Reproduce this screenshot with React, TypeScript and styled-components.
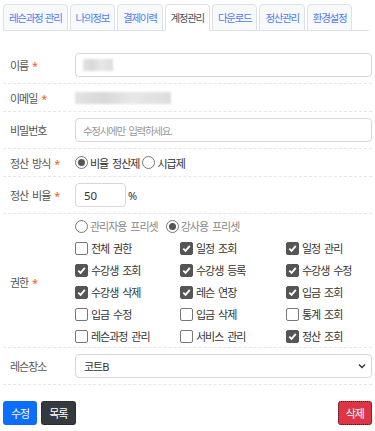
import styled, { createGlobalStyle } from "styled-components";

const GlobalStyle = createGlobalStyle`
  body {
    margin: 0;
    background: #fff;
    font-family: "Noto Sans", "Noto Sans CJK KR", sans-serif;
    font-size: 11px;
    letter-spacing: -1px;
    word-spacing: 2px;
    color: #333;
  }
  * { box-sizing: border-box; }
`;

const tabs = ["레슨과정 관리", "나의정보", "결제이력", "계정관리", "다운로드", "정산관리", "환경설정"];

const perms = [
  { name: "전체 권한", on: false },
  { name: "일정 조회", on: true },
  { name: "일정 관리", on: true },
  { name: "수강생 조회", on: true },
  { name: "수강생 등록", on: true },
  { name: "수강생 수정", on: true },
  { name: "수강생 삭제", on: true },
  { name: "레슨 연장", on: true },
  { name: "입금 조회", on: true },
  { name: "입금 수정", on: false },
  { name: "입금 삭제", on: false },
  { name: "통계 조회", on: false },
  { name: "레슨과정 관리", on: false },
  { name: "서비스 관리", on: false },
  { name: "정산 조회", on: true },
];

function Check({ on }: { on: boolean }) {
  return (
    <CheckBox $on={on}>
      {on && (
        <svg width="11" height="11" viewBox="0 0 12 12">
          <path d="M2.5 6.2 L5 8.6 L9.6 3.2" fill="none" stroke="#fff" strokeWidth="2" />
        </svg>
      )}
    </CheckBox>
  );
}

function Radio({ on }: { on: boolean }) {
  return <RadioDot $on={on} />;
}

function App() {
  return (
    <Page>
      <GlobalStyle />
      <Tabs>
        {tabs.map((t) => (
          <Tab key={t} $active={t === "계정관리"}>
            {t}
          </Tab>
        ))}
      </Tabs>
      <Form>
        <Row>
          <Label>
            이름 <Req>*</Req>
          </Label>
          <Input>
            <Blur $w={30} />
          </Input>
        </Row>
        <Row $tight>
          <Label>
            이메일 <Req>*</Req>
          </Label>
          <Blur $w={96} />
        </Row>
        <Row>
          <Label>비밀번호</Label>
          <Input>
            <Placeholder>수정시에만 입력하세요.</Placeholder>
          </Input>
        </Row>
        <Row $tight>
          <Label>
            정산 방식 <Req>*</Req>
          </Label>
          <Option>
            <Radio on />
            비율 정산제
          </Option>
          <Option>
            <Radio on={false} />
            시급제
          </Option>
        </Row>
        <Row>
          <Label>
            정산 비율 <Req>*</Req>
          </Label>
          <SmallInput>50</SmallInput>
          <Unit>%</Unit>
        </Row>
        <Row $tall>
          <Label>
            권한 <Req>*</Req>
          </Label>
          <PermBox>
            <Presets>
              <Option $muted>
                <Radio on={false} />
                관리자용 프리셋
              </Option>
              <Option $muted>
                <Radio on />
                강사용 프리셋
              </Option>
            </Presets>
            <PermGrid>
              {perms.map((p) => (
                <PermItem key={p.name}>
                  <Check on={p.on} />
                  {p.name}
                </PermItem>
              ))}
            </PermGrid>
          </PermBox>
        </Row>
        <Row>
          <Label>레슨장소</Label>
          <Select>
            <span>코트B</span>
            <svg width="8" height="6" viewBox="0 0 8 6">
              <path d="M1 1.5 L4 4.5 L7 1.5" fill="none" stroke="#333" strokeWidth="1.4" />
            </svg>
          </Select>
        </Row>
      </Form>
      <Actions>
        <Button $color="#0d6efd">수정</Button>
        <Button $color="#343a40" $dotted>
          목록
        </Button>
        <Spacer />
        <Button $color="#dc3545" $dotted>
          삭제
        </Button>
      </Actions>
    </Page>
  );
}

export default App;

const Page = styled.div`
  padding: 4px 3px 0;
`;

const Tabs = styled.ul`
  display: flex;
  gap: 2px;
  margin: 0;
  padding: 0;
  list-style: none;
  border-bottom: 1px solid #dee2e6;
  width: 366px;
`;

const Tab = styled.li<{ $active: boolean }>`
  height: 27px;
  padding: 0 5px;
  display: flex;
  align-items: center;
  margin-bottom: -1px;
  border: 1px solid #dee2e6;
  border-bottom-color: ${(p) => (p.$active ? "#fff" : "#dee2e6")};
  border-radius: 4px 4px 0 0;
  background: ${(p) => (p.$active ? "#fff" : "#f8f9fa")};
  color: ${(p) => (p.$active ? "#495057" : "#4d7cf5")};
  font-size: 10.5px;
  letter-spacing: -1.3px;
  word-spacing: 1px;
  white-space: nowrap;
`;

const Form = styled.div`
  margin-top: 16px;
`;

const Row = styled.div<{ $tight?: boolean; $tall?: boolean }>`
  display: flex;
  align-items: center;
  min-height: ${(p) => (p.$tight ? "28px" : "37px")};
  padding: ${(p) => (p.$tall ? "3px 0 0" : "0")};
  border-bottom: 1px dashed #e6e6e6;
`;

const Label = styled.div`
  width: 72px;
  flex-shrink: 0;
  padding-left: 7px;
  color: #555;
`;

const Req = styled.span`
  color: #f0631e;
`;

const Input = styled.div`
  flex: 1;
  height: 24px;
  border: 1px solid #d4d7db;
  border-radius: 4px;
  display: flex;
  align-items: center;
  padding: 0 7px;
`;

const SmallInput = styled(Input)`
  flex: none;
  width: 51px;
  padding: 0 8px;
  color: #333;
  font-size: 11.5px;
  letter-spacing: 0;
`;

const Unit = styled.span`
  margin-left: 2px;
  font-size: 11px;
  letter-spacing: 0;
`;

const Placeholder = styled.span`
  color: #999;
  font-size: 10.5px;
  letter-spacing: -1.3px;
`;

const Blur = styled.div<{ $w: number }>`
  width: ${(p) => p.$w}px;
  height: 12px;
  background: linear-gradient(90deg, #ddd, #cfcfcf 30%, #e2e2e2 60%, #d6d6d6);
  filter: blur(1.2px);
  opacity: 0.8;
`;

const Option = styled.label<{ $muted?: boolean }>`
  display: inline-flex;
  align-items: center;
  gap: 2px;
  margin-right: 3px;
  color: ${(p) => (p.$muted ? "#888" : "#333")};
`;

const RadioDot = styled.span<{ $on: boolean }>`
  width: 13px;
  height: 13px;
  border-radius: 50%;
  border: 1px solid #777;
  display: inline-flex;
  align-items: center;
  justify-content: center;
  &::after {
    content: "";
    width: 7px;
    height: 7px;
    border-radius: 50%;
    background: ${(p) => (p.$on ? "#555" : "transparent")};
  }
`;

const PermBox = styled.div`
  display: flex;
  flex-direction: column;
`;

const Presets = styled.div`
  display: flex;
  gap: 5px;
  height: 18px;
  align-items: center;
  margin-bottom: 2px;
`;

const PermGrid = styled.div`
  display: grid;
  grid-template-columns: 105px 106px 90px;
  grid-auto-rows: 22px;
`;

const PermItem = styled.label`
  display: flex;
  align-items: center;
  gap: 3px;
  color: #333;
  white-space: nowrap;
`;

const CheckBox = styled.span<{ $on: boolean }>`
  width: 13px;
  height: 13px;
  border-radius: 2px;
  border: 1px solid ${(p) => (p.$on ? "#555" : "#777")};
  background: ${(p) => (p.$on ? "#555" : "#fff")};
  display: inline-flex;
  align-items: center;
  justify-content: center;
`;

const Select = styled(Input)`
  justify-content: space-between;
  padding: 0 5px 0 8px;
  color: #333;
`;

const Actions = styled.div`
  display: flex;
  gap: 4px;
  margin-top: 16px;
`;

const Spacer = styled.div`
  flex: 1;
`;

const Button = styled.button<{ $color: string; $dotted?: boolean }>`
  height: 24px;
  padding: 0 7px;
  border: 1px ${(p) => (p.$dotted ? "dotted #222" : "solid transparent")};
  border-radius: 3px;
  background: ${(p) => p.$color};
  color: #fff;
  font-family: inherit;
  font-size: 11px;
  letter-spacing: -1px;
`;
